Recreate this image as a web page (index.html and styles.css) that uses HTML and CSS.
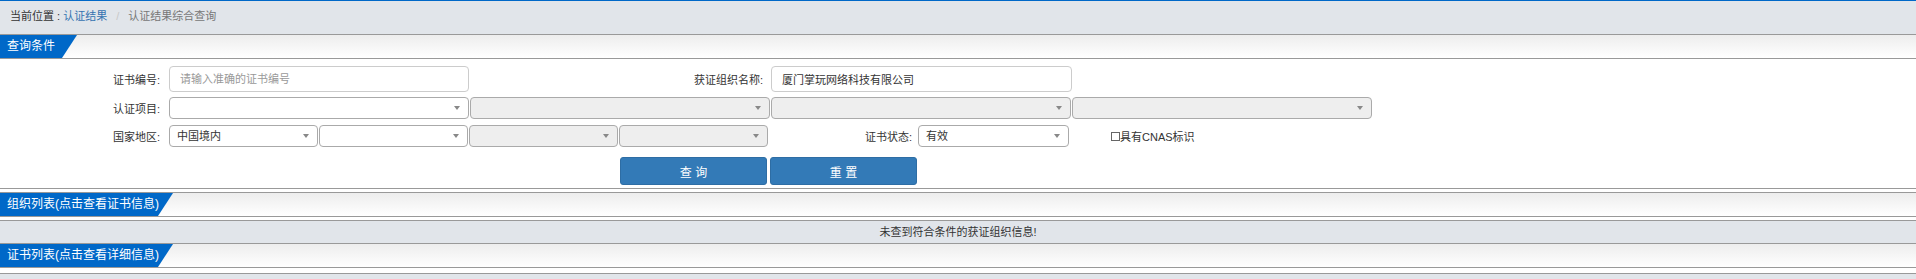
FILE: index.html
```html
<!DOCTYPE html>
<html lang="zh-CN">
<head>
  <meta charset="UTF-8" />
  <title>认证结果综合查询</title>
  <link rel="stylesheet" href="styles.css">
</head>
<body>
  <div class="breadcrumb">
    <span class="crumb-label">当前位置 : </span>
    <a class="crumb-link" href="#">认证结果</a>
    <span class="crumb-sep">/</span>
    <span class="crumb-current">认证结果综合查询</span>
  </div>

  <div class="panel-head"><span class="tab tab-short">查询条件</span></div>

  <form class="query-form" onsubmit="return false">
    <div class="form-row row-tall">
      <label class="lbl" for="certNo">证书编号:</label>
      <input class="txt w300" type="text" id="certNo" placeholder="请输入准确的证书编号">
      <label class="lbl lbl-mid" for="orgName">获证组织名称:</label>
      <input class="txt w301" type="text" id="orgName" value="厦门掌玩网络科技有限公司">
    </div>

    <div class="form-row">
      <span class="lbl">认证项目:</span>
      <div class="sel w300"></div>
      <div class="sel w300 disabled"></div>
      <div class="sel w300 disabled"></div>
      <div class="sel w300 disabled"></div>
    </div>

    <div class="form-row">
      <span class="lbl">国家地区:</span>
      <div class="pair">
        <div class="sel w149">中国境内</div>
        <div class="sel w149"></div>
      </div>
      <div class="pair">
        <div class="sel w149 disabled"></div>
        <div class="sel w149 disabled"></div>
      </div>
      <span class="lbl lbl-status">证书状态:</span>
      <div class="sel w151">有效</div>
      <label class="cnas"><input type="checkbox" class="chk">具有CNAS标识</label>
    </div>

    <div class="form-actions">
      <button class="btn" type="submit">查 询</button>
      <button class="btn" type="reset">重 置</button>
    </div>
  </form>

  <div class="panel-head boxed"><span class="tab tab-long">组织列表(点击查看证书信息)</span></div>
  <div class="message">未查到符合条件的获证组织信息!</div>
  <div class="panel-head"><span class="tab tab-long">证书列表(点击查看详细信息)</span></div>
  <div class="footer-band"></div>
</body>
</html>
```

FILE: styles.css
```css
body {
  margin: 0;
  background: #fff;
  font-family: "Liberation Sans", "Noto Sans CJK SC", sans-serif;
  font-size: 11px;
  color: #333;
  border-top: 1px solid #0068c8;
}

.breadcrumb {
  height: 33px;
  line-height: 30px;
  padding-left: 10px;
  background: #e1e5ea;
  border-bottom: 1px solid #999;
}

.crumb-label { color: #333; }
.crumb-link { color: #3573b0; text-decoration: none; }
.crumb-sep { color: #c8c8c8; margin: 0 6px; }
.crumb-current { color: #777; }

.panel-head {
  height: 23px;
  background: linear-gradient(#ededed, #ffffff);
  border-bottom: 1px solid #999;
}

.panel-head.boxed {
  margin-top: 3px;
  border-top: 1px solid #999;
}

.tab {
  display: inline-block;
  height: 23px;
  line-height: 23px;
  padding-left: 7px;
  font-size: 12px;
  color: #fff;
  background: #0068c8;
  box-sizing: border-box;
}

.tab-short {
  width: 77px;
  clip-path: polygon(0 0, 77px 0, 62px 100%, 0 100%);
}

.tab-long {
  width: 173px;
  clip-path: polygon(0 0, 173px 0, 158px 100%, 0 100%);
}

.query-form {
  height: 130px;
  margin: 0;
  padding-top: 7px;
  box-sizing: border-box;
  border-bottom: 1px solid #999;
}

.form-row {
  display: flex;
  align-items: center;
  height: 22px;
  margin-bottom: 6px;
}

.form-row.row-tall {
  height: 26px;
  margin-bottom: 5px;
}

.lbl {
  width: 160px;
  margin-right: 9px;
  text-align: right;
  color: #333;
}

.lbl-mid {
  width: 293px;
  margin-left: 1px;
  margin-right: 8px;
}

.lbl-status {
  width: 142px;
  margin-left: 1px;
  margin-right: 6px;
}

.txt {
  height: 26px;
  box-sizing: border-box;
  border: 1px solid #ccc;
  border-radius: 4px;
  padding: 0 10px;
  font: inherit;
  color: #333;
  outline: none;
}

.txt::placeholder { color: #999; }

.w300 { width: 300px; }
.w301 { width: 301px; }
.w149 { width: 149px; }
.w151 { width: 151px; }

.sel {
  position: relative;
  height: 22px;
  line-height: 20px;
  box-sizing: border-box;
  border: 1px solid #aaa;
  border-radius: 4px;
  padding-left: 7px;
  background: #fff;
  color: #333;
  margin-right: 1px;
}

.sel::after {
  content: "";
  position: absolute;
  right: 8px;
  top: 8px;
  border-left: 3px solid transparent;
  border-right: 3px solid transparent;
  border-top: 4px solid #888;
}

.sel.disabled { background: #eee; }

.pair {
  display: flex;
  gap: 1px;
  margin-right: 1px;
}

.pair .sel { margin-right: 0; }

.cnas {
  display: flex;
  align-items: center;
  margin-left: 41px;
  color: #333;
}

.chk {
  appearance: none;
  width: 9px;
  height: 9px;
  margin: 0;
  border: 1px solid #666;
  background: #fff;
}

.form-actions {
  display: flex;
  gap: 3px;
  padding-left: 620px;
  margin-top: 10px;
}

.btn {
  width: 147px;
  height: 28px;
  border: 1px solid #2e6da4;
  border-radius: 3px;
  background: #337ab7;
  color: #fff;
  font: inherit;
  font-size: 12px;
  cursor: pointer;
}

.message {
  height: 22px;
  line-height: 22px;
  margin-top: 3px;
  text-align: center;
  background: #e1e5ea;
  border-top: 1px solid #999;
  border-bottom: 1px solid #999;
}

.footer-band {
  height: 5px;
  margin-top: 5px;
  background: #e1e5ea;
  border-top: 1px solid #999;
}
```
